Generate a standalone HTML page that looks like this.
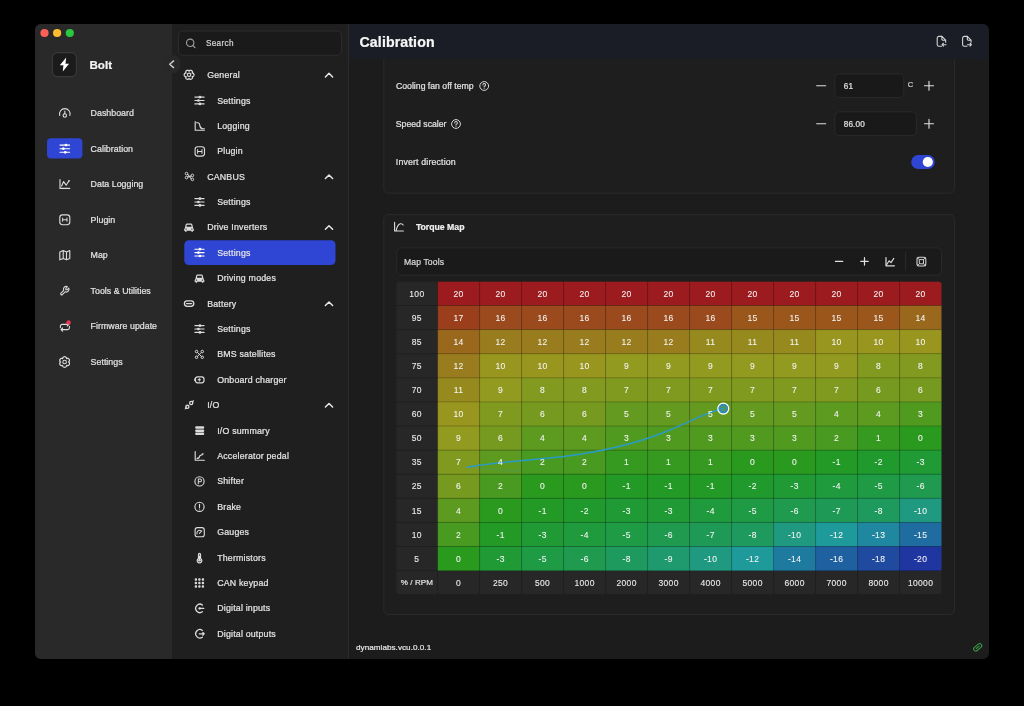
<!DOCTYPE html>
<html><head><meta charset="utf-8">
<style>
*{box-sizing:border-box;margin:0;padding:0}
html,body{width:1024px;height:706px;background:#000;overflow:hidden;font-family:"Liberation Sans",sans-serif}
#txt{position:absolute;left:0;top:0;width:1024px;height:706px;will-change:transform}
#win{position:absolute;left:35px;top:24px;width:953.5px;height:635px;border-radius:6px;overflow:hidden;background:#1c1c1c}
#sb1{position:absolute;left:0;top:0;width:137px;height:635px;background:#292929}
#sb2{position:absolute;left:137px;top:0;width:177px;height:635px;background:#1f1f1f;border-right:1px solid #2b2b2b}
.t{position:absolute;white-space:nowrap;line-height:1;color:#e2e2e2;-webkit-text-stroke:0.22px currentColor}
svg{position:absolute;left:0;top:0}
.hd{position:absolute;left:349px;top:24px;width:639.5px;height:35.3px;overflow:hidden}
</style></head><body>

<div id="win">
  <div id="sb1"></div>
  <div id="sb2"></div>
</div>

<svg width="1024" height="706" viewBox="0 0 1024 706">
<defs><clipPath id="mainclip"><rect x="349" y="59.3" width="639.5" height="599.7"/></clipPath></defs>
<circle cx="44.5" cy="33" r="4.1" fill="#fe5f57"/><circle cx="57.1" cy="33" r="4.1" fill="#febc2e"/><circle cx="69.8" cy="33" r="4.1" fill="#28c840"/>
<rect x="52.4" y="52.6" width="24" height="24" rx="5" fill="#1b1b1b" stroke="#3a3a3a" stroke-width="1.1"/><path d="M66.2,57.6L59.8,65.3H63.4L62.8,71.6L69.1,63.7H65.5Z" fill="#ffffff"/><circle cx="171.8" cy="64" r="9.2" fill="#282828"/><path d="M173.6,60.9L169.7,64.3L173.6,67.6" fill="none" stroke="#cfcfcf" stroke-width="1.4" stroke-linecap="round" stroke-linejoin="round" /><rect x="47" y="138.3" width="35.4" height="20.2" rx="4" fill="#2f45d3"/><path d="M59.7,115.4A5.3,5.3 0 1 1 69.9,115.4" fill="none" stroke="#dcdcdc" stroke-width="1.12" stroke-linecap="round" stroke-linejoin="round" /><circle cx="64.8" cy="115.5" r="1.7" fill="none" stroke="#dcdcdc" stroke-width="1.12"/><path d="M64.8,111.0V113.8" fill="none" stroke="#dcdcdc" stroke-width="1.12" stroke-linecap="round" stroke-linejoin="round" /><path d="M60.00,145.10H69.60" fill="none" stroke="#ffffff" stroke-width="1.12" stroke-linecap="round" stroke-linejoin="round" /><circle cx="65.95" cy="145.10" r="1.35" fill="#ffffff"/><path d="M60.00,148.70H69.60" fill="none" stroke="#ffffff" stroke-width="1.12" stroke-linecap="round" stroke-linejoin="round" /><circle cx="63.36" cy="148.70" r="1.35" fill="#ffffff"/><path d="M60.00,152.30H69.60" fill="none" stroke="#ffffff" stroke-width="1.12" stroke-linecap="round" stroke-linejoin="round" /><circle cx="65.28" cy="152.30" r="1.35" fill="#ffffff"/><path d="M60,179.6V188.39999999999998H69.7" fill="none" stroke="#dcdcdc" stroke-width="1.12" stroke-linecap="round" stroke-linejoin="round" /><path d="M61.6,186.0L63.6,181.6L66.2,185.2L68.8,181.0" fill="none" stroke="#dcdcdc" stroke-width="1.12" stroke-linecap="round" stroke-linejoin="round" /><circle cx="69" cy="180.79999999999998" r="0.9" fill="#dcdcdc"/><rect x="59.8" y="214.89999999999998" width="10" height="9.8" rx="2.6" fill="none" stroke="#dcdcdc" stroke-width="1.12"/><path d="M62.6,219.7H67M62.6,218.1V221.29999999999998M67,218.1V221.29999999999998" fill="none" stroke="#dcdcdc" stroke-width="1.01" stroke-linecap="round" stroke-linejoin="round" /><path d="M59.8,252.0L63.2,250.6L66.5,252.0L69.8,250.6V258.4L66.5,259.8L63.2,258.4L59.8,259.8Z M63.2,250.6V258.4 M66.5,252.0V259.8" fill="none" stroke="#dcdcdc" stroke-width="1.12" stroke-linecap="round" stroke-linejoin="round" /><g transform="translate(70.4,285.09999999999997) scale(-0.46,0.46)"><path d="M7 10h3v-3l-3.5 -3.5a6 6 0 0 1 8 8l6 6a2 2 0 0 1 -3 3l-6 -6a6 6 0 0 1 -8 -8l3.5 3.5" fill="none" stroke="#dcdcdc" stroke-width="2.3" stroke-linecap="round" stroke-linejoin="round"/></g><path d="M60.4,327.6V326.2A1.8,1.8 0 0 1 62.2,324.4H68.8 M67.2,322.8L68.8,324.4L67.2,326.0" fill="none" stroke="#dcdcdc" stroke-width="1.12" stroke-linecap="round" stroke-linejoin="round" /><path d="M69.4,326.4V327.8A1.8,1.8 0 0 1 67.6,329.6H61 M62.6,328.0L61,329.6L62.6,331.2" fill="none" stroke="#dcdcdc" stroke-width="1.12" stroke-linecap="round" stroke-linejoin="round" /><circle cx="68.6" cy="322.4" r="2.2" fill="#f2344f"/><path d="M68.50,362.00 L69.02,362.29 L69.25,362.61 L69.39,362.95 L69.47,363.30 L69.48,363.66 L69.44,364.00 L69.34,364.34 L69.19,364.65 L68.99,364.94 L68.75,365.19 L68.47,365.40 L68.16,365.56 L67.82,365.67 L67.45,365.72 L67.06,365.68 L66.55,365.38 L66.56,365.97 L66.39,366.33 L66.17,366.62 L65.90,366.87 L65.61,367.05 L65.28,367.19 L64.95,367.27 L64.60,367.30 L64.25,367.27 L63.92,367.19 L63.59,367.05 L63.30,366.87 L63.03,366.62 L62.81,366.33 L62.64,365.97 L62.65,365.38 L62.14,365.68 L61.75,365.72 L61.38,365.67 L61.04,365.56 L60.73,365.40 L60.45,365.19 L60.21,364.94 L60.01,364.65 L59.86,364.34 L59.76,364.00 L59.72,363.66 L59.73,363.30 L59.81,362.95 L59.95,362.61 L60.18,362.29 L60.70,362.00 L60.18,361.71 L59.95,361.39 L59.81,361.05 L59.73,360.70 L59.72,360.34 L59.76,360.00 L59.86,359.66 L60.01,359.35 L60.21,359.06 L60.45,358.81 L60.73,358.60 L61.04,358.44 L61.38,358.33 L61.75,358.28 L62.14,358.32 L62.65,358.62 L62.64,358.03 L62.81,357.67 L63.03,357.38 L63.30,357.13 L63.59,356.95 L63.92,356.81 L64.25,356.73 L64.60,356.70 L64.95,356.73 L65.28,356.81 L65.61,356.95 L65.90,357.13 L66.17,357.38 L66.39,357.67 L66.56,358.03 L66.55,358.62 L67.06,358.32 L67.45,358.28 L67.82,358.33 L68.16,358.44 L68.47,358.60 L68.75,358.81 L68.99,359.06 L69.19,359.35 L69.34,359.66 L69.44,360.00 L69.48,360.34 L69.47,360.70 L69.39,361.05 L69.25,361.39 L69.02,361.71Z" fill="none" stroke="#dcdcdc" stroke-width="1.18" stroke-linecap="round" stroke-linejoin="round" /><circle cx="64.6" cy="362.0" r="1.8" fill="none" stroke="#dcdcdc" stroke-width="1.05"/><rect x="178.5" y="31" width="163" height="24.2" rx="4.5" fill="#1a1a1a" stroke="#2c2c2c" stroke-width="1.12"/><circle cx="190.2" cy="42.8" r="3.7" fill="none" stroke="#a0a0a0" stroke-width="1.12"/><path d="M192.9,45.5L195,47.6" fill="none" stroke="#a0a0a0" stroke-width="1.12" stroke-linecap="round" stroke-linejoin="round" /><rect x="184.3" y="240.2" width="151.2" height="24.9" rx="4.5" fill="#2f45d3"/><path d="M325.40,76.90L329.00,73.30L332.60,76.90" fill="none" stroke="#e8e8e8" stroke-width="1.46" stroke-linecap="round" stroke-linejoin="round" /><path d="M325.40,178.50L329.00,174.90L332.60,178.50" fill="none" stroke="#e8e8e8" stroke-width="1.46" stroke-linecap="round" stroke-linejoin="round" /><path d="M325.40,229.30L329.00,225.70L332.60,229.30" fill="none" stroke="#e8e8e8" stroke-width="1.46" stroke-linecap="round" stroke-linejoin="round" /><path d="M325.40,305.50L329.00,301.90L332.60,305.50" fill="none" stroke="#e8e8e8" stroke-width="1.46" stroke-linecap="round" stroke-linejoin="round" /><path d="M325.40,407.10L329.00,403.50L332.60,407.10" fill="none" stroke="#e8e8e8" stroke-width="1.46" stroke-linecap="round" stroke-linejoin="round" /><path d="M194.00,74.80 L193.97,75.12 L193.89,75.43 L193.76,75.73 L193.58,76.00 L193.35,76.24 L193.06,76.44 L192.71,76.58 L192.13,76.55 L192.45,77.04 L192.50,77.41 L192.47,77.76 L192.38,78.08 L192.23,78.37 L192.04,78.64 L191.81,78.86 L191.55,79.04 L191.26,79.18 L190.95,79.27 L190.63,79.30 L190.30,79.28 L189.97,79.20 L189.66,79.05 L189.36,78.82 L189.10,78.30 L188.84,78.82 L188.54,79.05 L188.23,79.20 L187.90,79.28 L187.57,79.30 L187.25,79.27 L186.94,79.18 L186.65,79.04 L186.39,78.86 L186.16,78.64 L185.97,78.37 L185.82,78.08 L185.73,77.76 L185.70,77.41 L185.75,77.04 L186.07,76.55 L185.49,76.58 L185.14,76.44 L184.85,76.24 L184.62,76.00 L184.44,75.73 L184.31,75.43 L184.23,75.12 L184.20,74.80 L184.23,74.48 L184.31,74.17 L184.44,73.87 L184.62,73.60 L184.85,73.36 L185.14,73.16 L185.49,73.02 L186.07,73.05 L185.75,72.56 L185.70,72.19 L185.73,71.84 L185.82,71.52 L185.97,71.23 L186.16,70.96 L186.39,70.74 L186.65,70.56 L186.94,70.42 L187.25,70.33 L187.57,70.30 L187.90,70.32 L188.23,70.40 L188.54,70.55 L188.84,70.78 L189.10,71.30 L189.36,70.78 L189.66,70.55 L189.97,70.40 L190.30,70.32 L190.63,70.30 L190.95,70.33 L191.26,70.42 L191.55,70.56 L191.81,70.74 L192.04,70.96 L192.23,71.23 L192.38,71.52 L192.47,71.84 L192.50,72.19 L192.45,72.56 L192.13,73.05 L192.71,73.02 L193.06,73.16 L193.35,73.36 L193.58,73.60 L193.76,73.87 L193.89,74.17 L193.97,74.48Z" fill="none" stroke="#dcdcdc" stroke-width="1.23" stroke-linecap="round" stroke-linejoin="round" /><circle cx="189.1" cy="74.8" r="1.7" fill="none" stroke="#dcdcdc" stroke-width="1.1"/><circle cx="186.5" cy="173.6" r="1.3" fill="none" stroke="#dcdcdc" stroke-width="0.9"/><circle cx="186.5" cy="177.6" r="1.3" fill="none" stroke="#dcdcdc" stroke-width="0.9"/><circle cx="192.4" cy="175.4" r="1.3" fill="none" stroke="#dcdcdc" stroke-width="0.9"/><circle cx="192.4" cy="179.4" r="1.3" fill="none" stroke="#dcdcdc" stroke-width="0.9"/><path d="M187.7,174.2L191.2,178.79999999999998 M187.7,177.0L191.2,176.0" fill="none" stroke="#dcdcdc" stroke-width="1.01" stroke-linecap="round" stroke-linejoin="round" /><path d="M184.8,228.2L185.7,224.6Q186.0,223.6 187.0,223.6H191.0Q192.0,223.6 192.3,224.6L193.2,228.2Q193.9,228.79999999999998 193.9,229.79999999999998V230.79999999999998H192.9V231.79999999999998H191.4V230.79999999999998H186.6V231.79999999999998H185.1V230.79999999999998H184.1V229.79999999999998Q184.1,228.79999999999998 184.8,228.2Z" fill="#dcdcdc"/><path d="M186.4,226.79999999999998L186.9,224.79999999999998H191.1L191.6,226.79999999999998Z" fill="#1f1f1f"/><circle cx="186.1" cy="229.1" r="0.7" fill="#1f1f1f"/><circle cx="191.9" cy="229.1" r="0.7" fill="#1f1f1f"/><rect x="184.4" y="300.8" width="9.4" height="5.6" rx="2.8" fill="none" stroke="#dcdcdc" stroke-width="1.3"/><path d="M186.6,303.6H191.6" fill="none" stroke="#dcdcdc" stroke-width="1.34" stroke-linecap="round" stroke-linejoin="round" /><circle cx="187.4" cy="406.80" r="1.55" fill="none" stroke="#dcdcdc" stroke-width="1.3"/><circle cx="191.2" cy="403.00" r="1.55" fill="none" stroke="#dcdcdc" stroke-width="1.3"/><path d="M184.6,409.60L185.6,406.80L187.4,408.60Z" fill="#dcdcdc"/><path d="M194.2,400.00L191.2,401.20L193,403.00Z" fill="#dcdcdc"/><path d="M194.90,97.10H204.10" fill="none" stroke="#dcdcdc" stroke-width="1.12" stroke-linecap="round" stroke-linejoin="round" /><circle cx="199.96" cy="97.10" r="1.35" fill="#dcdcdc"/><path d="M194.90,100.50H204.10" fill="none" stroke="#dcdcdc" stroke-width="1.12" stroke-linecap="round" stroke-linejoin="round" /><circle cx="198.40" cy="100.50" r="1.35" fill="#dcdcdc"/><path d="M194.90,103.90H204.10" fill="none" stroke="#dcdcdc" stroke-width="1.12" stroke-linecap="round" stroke-linejoin="round" /><circle cx="199.96" cy="103.90" r="1.35" fill="#dcdcdc"/><path d="M194.90,198.60H204.10" fill="none" stroke="#dcdcdc" stroke-width="1.12" stroke-linecap="round" stroke-linejoin="round" /><circle cx="199.96" cy="198.60" r="1.35" fill="#dcdcdc"/><path d="M194.90,202.00H204.10" fill="none" stroke="#dcdcdc" stroke-width="1.12" stroke-linecap="round" stroke-linejoin="round" /><circle cx="198.40" cy="202.00" r="1.35" fill="#dcdcdc"/><path d="M194.90,205.40H204.10" fill="none" stroke="#dcdcdc" stroke-width="1.12" stroke-linecap="round" stroke-linejoin="round" /><circle cx="199.96" cy="205.40" r="1.35" fill="#dcdcdc"/><path d="M194.90,249.20H204.10" fill="none" stroke="#ffffff" stroke-width="1.12" stroke-linecap="round" stroke-linejoin="round" /><circle cx="199.96" cy="249.20" r="1.35" fill="#ffffff"/><path d="M194.90,252.60H204.10" fill="none" stroke="#ffffff" stroke-width="1.12" stroke-linecap="round" stroke-linejoin="round" /><circle cx="198.40" cy="252.60" r="1.35" fill="#ffffff"/><path d="M194.90,256.00H204.10" fill="none" stroke="#ffffff" stroke-width="1.12" stroke-linecap="round" stroke-linejoin="round" /><circle cx="199.96" cy="256.00" r="1.35" fill="#ffffff"/><path d="M194.90,325.60H204.10" fill="none" stroke="#dcdcdc" stroke-width="1.12" stroke-linecap="round" stroke-linejoin="round" /><circle cx="199.96" cy="325.60" r="1.35" fill="#dcdcdc"/><path d="M194.90,329.00H204.10" fill="none" stroke="#dcdcdc" stroke-width="1.12" stroke-linecap="round" stroke-linejoin="round" /><circle cx="198.40" cy="329.00" r="1.35" fill="#dcdcdc"/><path d="M194.90,332.40H204.10" fill="none" stroke="#dcdcdc" stroke-width="1.12" stroke-linecap="round" stroke-linejoin="round" /><circle cx="199.96" cy="332.40" r="1.35" fill="#dcdcdc"/><path d="M195.2,121.6V130.2H204.4" fill="none" stroke="#dcdcdc" stroke-width="1.12" stroke-linecap="round" stroke-linejoin="round" /><path d="M196.6,122.8H198Q199.4,122.8 199.8,125.4Q200.3,128.8 202.8,128.8H204.4" fill="none" stroke="#dcdcdc" stroke-width="1.12" stroke-linecap="round" stroke-linejoin="round" /><rect x="195.1" y="146.70000000000002" width="9.4" height="9.4" rx="2.6" fill="none" stroke="#dcdcdc" stroke-width="1.12"/><path d="M197.6,151.4H202M197.6,149.6V153.20000000000002M202,149.6V153.20000000000002" fill="none" stroke="#dcdcdc" stroke-width="1.01" stroke-linecap="round" stroke-linejoin="round" /><path d="M195.3,279.2L196.2,275.59999999999997Q196.5,274.59999999999997 197.5,274.59999999999997H201.5Q202.5,274.59999999999997 202.8,275.59999999999997L203.7,279.2Q204.4,279.8 204.4,280.8V281.8H203.4V282.8H201.9V281.8H197.1V282.8H195.6V281.8H194.6V280.8Q194.6,279.8 195.3,279.2Z" fill="#dcdcdc"/><path d="M196.9,277.8L197.4,275.8H201.6L202.1,277.8Z" fill="#1f1f1f"/><circle cx="196.6" cy="280.09999999999997" r="0.7" fill="#1f1f1f"/><circle cx="202.4" cy="280.09999999999997" r="0.7" fill="#1f1f1f"/><g fill="none" stroke="#dcdcdc" stroke-width="1.0"><circle cx="196.53" cy="351.52" r="1.25"/><circle cx="202.28" cy="351.52" r="1.25"/><circle cx="196.53" cy="357.27" r="1.25"/><circle cx="202.28" cy="357.27" r="1.25"/><path d="M197.4,352.4L201.4,356.4M201.4,352.4L197.4,356.4"/></g><rect x="195.4" y="376.8" width="8.6" height="6" rx="2.2" fill="none" stroke="#dcdcdc" stroke-width="1.2"/><path d="M198,379.8H200.6M199.3,378.5V381.1" fill="none" stroke="#dcdcdc" stroke-width="1.01" stroke-linecap="round" stroke-linejoin="round" /><path d="M194.2,378.6h0.8v2.4h-0.8z" fill="#dcdcdc"/><rect x="195.2" y="426.30" width="9" height="2.5" rx="1" fill="#dcdcdc"/><rect x="195.2" y="429.40" width="9" height="2.5" rx="1" fill="#dcdcdc"/><rect x="195.2" y="432.50" width="9" height="2.5" rx="1" fill="#dcdcdc"/><path d="M195.2,451.6V460.2H204.4" fill="none" stroke="#dcdcdc" stroke-width="1.12" stroke-linecap="round" stroke-linejoin="round" /><path d="M197,458.4Q199.4,458.4 199.8,455.8L202.4,454.4" fill="none" stroke="#dcdcdc" stroke-width="1.12" stroke-linecap="round" stroke-linejoin="round" /><path d="M203.8,453.4L201.6,453.2L202.8,455.4Z" fill="#dcdcdc"/><circle cx="199.5" cy="481.4" r="4.6" fill="none" stroke="#dcdcdc" stroke-width="1.12"/><path d="M198.3,483.79999999999995V479.09999999999997H200.1A1.35,1.35 0 0 1 200.1,481.79999999999995H198.3" fill="none" stroke="#dcdcdc" stroke-width="1.01" stroke-linecap="round" stroke-linejoin="round" /><circle cx="199.5" cy="506.8" r="4.6" fill="none" stroke="#dcdcdc" stroke-width="1.12"/><path d="M199.5,504.40000000000003V507.40000000000003" fill="none" stroke="#dcdcdc" stroke-width="1.12" stroke-linecap="round" stroke-linejoin="round" /><circle cx="199.5" cy="509.0" r="0.6" fill="#dcdcdc"/><rect x="195.1" y="527.6" width="9.2" height="9.2" rx="2.4" fill="none" stroke="#dcdcdc" stroke-width="1.12"/><path d="M197,534.0A2.8,2.8 0 0 1 200.8,530.6 M199.4,533.4000000000001L201.8,530.8000000000001" fill="none" stroke="#dcdcdc" stroke-width="1.01" stroke-linecap="round" stroke-linejoin="round" /><path d="M198.5,558.5V554.4A1,1 0 0 1 200.5,554.4V558.5A2.3,2.3 0 1 1 198.5,558.5Z" fill="none" stroke="#dcdcdc" stroke-width="1.23" stroke-linecap="round" stroke-linejoin="round" /><circle cx="199.5" cy="560.2" r="1.3" fill="#dcdcdc"/><path d="M199.5,556.1V559.6" fill="none" stroke="#dcdcdc" stroke-width="1.01" stroke-linecap="round" stroke-linejoin="round" /><rect x="194.70" y="578.30" width="2.4" height="2.4" rx="0.9" fill="#dcdcdc"/><rect x="194.70" y="581.80" width="2.4" height="2.4" rx="0.9" fill="#dcdcdc"/><rect x="194.70" y="585.30" width="2.4" height="2.4" rx="0.9" fill="#dcdcdc"/><rect x="198.20" y="578.30" width="2.4" height="2.4" rx="0.9" fill="#dcdcdc"/><rect x="198.20" y="581.80" width="2.4" height="2.4" rx="0.9" fill="#dcdcdc"/><rect x="198.20" y="585.30" width="2.4" height="2.4" rx="0.9" fill="#dcdcdc"/><rect x="201.70" y="578.30" width="2.4" height="2.4" rx="0.9" fill="#dcdcdc"/><rect x="201.70" y="581.80" width="2.4" height="2.4" rx="0.9" fill="#dcdcdc"/><rect x="201.70" y="585.30" width="2.4" height="2.4" rx="0.9" fill="#dcdcdc"/><path d="M202.4,605.0A4.2,4.2 0 1 0 202.4,611.8" fill="none" stroke="#dcdcdc" stroke-width="1.29" stroke-linecap="round" stroke-linejoin="round" /><path d="M203.8,608.4H199.6" fill="none" stroke="#dcdcdc" stroke-width="1.23" stroke-linecap="round" stroke-linejoin="round" /><circle cx="199.6" cy="608.4" r="1.2" fill="#dcdcdc"/><path d="M202.4,630.4A4.2,4.2 0 1 0 202.4,637.1999999999999" fill="none" stroke="#dcdcdc" stroke-width="1.29" stroke-linecap="round" stroke-linejoin="round" /><path d="M199.2,633.8H204.2M202.8,632.4L204.2,633.8L202.8,635.1999999999999" fill="none" stroke="#dcdcdc" stroke-width="1.23" stroke-linecap="round" stroke-linejoin="round" /><rect x="383.8" y="40" width="570.6" height="153.2" rx="4.5" fill="#1e1e1e" stroke="#2b2b2b" stroke-width="1"/><circle cx="484.2" cy="86.0" r="4.4" fill="none" stroke="#d8d8d8" stroke-width="1"/><path d="M482.9,84.9A1.35,1.35 0 1 1 484.2,86.3V86.9" fill="none" stroke="#d8d8d8" stroke-width="1.01" stroke-linecap="round" stroke-linejoin="round" /><circle cx="484.2" cy="88.3" r="0.55" fill="#d8d8d8"/><circle cx="456.0" cy="124.0" r="4.4" fill="none" stroke="#d8d8d8" stroke-width="1"/><path d="M454.7,122.9A1.35,1.35 0 1 1 456.0,124.3V124.9" fill="none" stroke="#d8d8d8" stroke-width="1.01" stroke-linecap="round" stroke-linejoin="round" /><circle cx="456.0" cy="126.3" r="0.55" fill="#d8d8d8"/><path d="M816.7,85.8H825.7" fill="none" stroke="#e0e0e0" stroke-width="1.12" stroke-linecap="round" stroke-linejoin="round" /><path d="M924.5,85.8H933.5M929.0,81.3V90.3" fill="none" stroke="#e0e0e0" stroke-width="1.12" stroke-linecap="round" stroke-linejoin="round" /><path d="M816.7,123.8H825.7" fill="none" stroke="#e0e0e0" stroke-width="1.12" stroke-linecap="round" stroke-linejoin="round" /><path d="M924.5,123.8H933.5M929.0,119.3V128.3" fill="none" stroke="#e0e0e0" stroke-width="1.12" stroke-linecap="round" stroke-linejoin="round" /><rect x="834.8" y="73.8" width="69" height="23.8" rx="4.5" fill="#191919" stroke="#2a2a2a" stroke-width="1"/><rect x="834.8" y="111.8" width="81.6" height="23.8" rx="4.5" fill="#191919" stroke="#2a2a2a" stroke-width="1"/><rect x="911.2" y="155" width="23.6" height="14" rx="7" fill="#2f45d3"/><circle cx="927.8" cy="162" r="5.1" fill="#ffffff"/><rect x="383.8" y="214.6" width="570.6" height="399.8" rx="4.5" fill="#1e1e1e" stroke="#2b2b2b" stroke-width="1"/><path d="M394.6,222.4V231H403.4" fill="none" stroke="#dcdcdc" stroke-width="1.12" stroke-linecap="round" stroke-linejoin="round" /><path d="M396.2,230.6Q397.4,224.6 400.2,223.8Q402.4,223.4 403.2,225" fill="none" stroke="#dcdcdc" stroke-width="1.12" stroke-linecap="round" stroke-linejoin="round" /><rect x="396.8" y="247.9" width="544.8" height="27.2" rx="4.5" fill="#1a1a1a" stroke="#2a2a2a" stroke-width="1"/><path d="M835.5,261.4H842.7" fill="none" stroke="#e0e0e0" stroke-width="1.23" stroke-linecap="round" stroke-linejoin="round" /><path d="M860.8,261.4H868.2M864.5,257.7V265.09999999999997" fill="none" stroke="#e0e0e0" stroke-width="1.23" stroke-linecap="round" stroke-linejoin="round" /><path d="M886,257.6V265.8H894.4" fill="none" stroke="#dcdcdc" stroke-width="1.23" stroke-linecap="round" stroke-linejoin="round" /><path d="M886.4,265L889.2,260.8L891,262.6L893.8,258.4" fill="none" stroke="#dcdcdc" stroke-width="1.12" stroke-linecap="round" stroke-linejoin="round" /><path d="M905.6,252.2V270.6" fill="none" stroke="#2a2a2a" stroke-width="1.12" stroke-linecap="round" stroke-linejoin="round" /><rect x="917" y="257.3" width="8.8" height="8.8" rx="2" fill="none" stroke="#d8d8d8" stroke-width="1.05"/><rect x="919.3" y="259.6" width="4.2" height="4.2" rx="0.5" fill="none" stroke="#d8d8d8" stroke-width="0.95"/><path d="M917.6,257.9L919.4,259.7M925.2,257.9L923.4,259.7M917.6,265.5L919.4,263.7M925.2,265.5L923.4,263.7" fill="none" stroke="#d8d8d8" stroke-width="0.9" stroke-linecap="round" stroke-linejoin="round" /><clipPath id="tc"><rect x="396.2" y="281.4" width="545.40" height="312.80" rx="3.5"/></clipPath><g clip-path="url(#tc)"><rect x="396.2" y="281.4" width="545.40" height="312.80" fill="#272727"/><rect x="437.60" y="281.40" width="42.20" height="24.30" fill="rgb(156, 27, 30)"/><rect x="479.60" y="281.40" width="42.20" height="24.30" fill="rgb(156, 27, 30)"/><rect x="521.60" y="281.40" width="42.20" height="24.30" fill="rgb(156, 27, 30)"/><rect x="563.60" y="281.40" width="42.20" height="24.30" fill="rgb(156, 27, 30)"/><rect x="605.60" y="281.40" width="42.20" height="24.30" fill="rgb(156, 27, 30)"/><rect x="647.60" y="281.40" width="42.20" height="24.30" fill="rgb(156, 27, 30)"/><rect x="689.60" y="281.40" width="42.20" height="24.30" fill="rgb(156, 27, 30)"/><rect x="731.60" y="281.40" width="42.20" height="24.30" fill="rgb(156, 27, 30)"/><rect x="773.60" y="281.40" width="42.20" height="24.30" fill="rgb(156, 27, 30)"/><rect x="815.60" y="281.40" width="42.20" height="24.30" fill="rgb(156, 27, 30)"/><rect x="857.60" y="281.40" width="42.20" height="24.30" fill="rgb(156, 27, 30)"/><rect x="899.60" y="281.40" width="42.20" height="24.30" fill="rgb(156, 27, 30)"/><rect x="437.60" y="305.50" width="42.20" height="24.30" fill="rgb(154, 62, 28)"/><rect x="479.60" y="305.50" width="42.20" height="24.30" fill="rgb(154, 74, 28)"/><rect x="521.60" y="305.50" width="42.20" height="24.30" fill="rgb(154, 74, 28)"/><rect x="563.60" y="305.50" width="42.20" height="24.30" fill="rgb(154, 74, 28)"/><rect x="605.60" y="305.50" width="42.20" height="24.30" fill="rgb(154, 74, 28)"/><rect x="647.60" y="305.50" width="42.20" height="24.30" fill="rgb(154, 74, 28)"/><rect x="689.60" y="305.50" width="42.20" height="24.30" fill="rgb(154, 74, 28)"/><rect x="731.60" y="305.50" width="42.20" height="24.30" fill="rgb(155, 86, 28)"/><rect x="773.60" y="305.50" width="42.20" height="24.30" fill="rgb(155, 86, 28)"/><rect x="815.60" y="305.50" width="42.20" height="24.30" fill="rgb(155, 86, 28)"/><rect x="857.60" y="305.50" width="42.20" height="24.30" fill="rgb(155, 86, 28)"/><rect x="899.60" y="305.50" width="42.20" height="24.30" fill="rgb(154, 104, 28)"/><rect x="437.60" y="329.60" width="42.20" height="24.30" fill="rgb(154, 104, 28)"/><rect x="479.60" y="329.60" width="42.20" height="24.30" fill="rgb(152, 124, 30)"/><rect x="521.60" y="329.60" width="42.20" height="24.30" fill="rgb(152, 124, 30)"/><rect x="563.60" y="329.60" width="42.20" height="24.30" fill="rgb(152, 124, 30)"/><rect x="605.60" y="329.60" width="42.20" height="24.30" fill="rgb(152, 124, 30)"/><rect x="647.60" y="329.60" width="42.20" height="24.30" fill="rgb(152, 124, 30)"/><rect x="689.60" y="329.60" width="42.20" height="24.30" fill="rgb(150, 138, 30)"/><rect x="731.60" y="329.60" width="42.20" height="24.30" fill="rgb(150, 138, 30)"/><rect x="773.60" y="329.60" width="42.20" height="24.30" fill="rgb(150, 138, 30)"/><rect x="815.60" y="329.60" width="42.20" height="24.30" fill="rgb(152, 150, 30)"/><rect x="857.60" y="329.60" width="42.20" height="24.30" fill="rgb(152, 150, 30)"/><rect x="899.60" y="329.60" width="42.20" height="24.30" fill="rgb(152, 150, 30)"/><rect x="437.60" y="353.70" width="42.20" height="24.30" fill="rgb(152, 124, 30)"/><rect x="479.60" y="353.70" width="42.20" height="24.30" fill="rgb(152, 150, 30)"/><rect x="521.60" y="353.70" width="42.20" height="24.30" fill="rgb(152, 150, 30)"/><rect x="563.60" y="353.70" width="42.20" height="24.30" fill="rgb(152, 150, 30)"/><rect x="605.60" y="353.70" width="42.20" height="24.30" fill="rgb(146, 154, 31)"/><rect x="647.60" y="353.70" width="42.20" height="24.30" fill="rgb(146, 154, 31)"/><rect x="689.60" y="353.70" width="42.20" height="24.30" fill="rgb(146, 154, 31)"/><rect x="731.60" y="353.70" width="42.20" height="24.30" fill="rgb(146, 154, 31)"/><rect x="773.60" y="353.70" width="42.20" height="24.30" fill="rgb(146, 154, 31)"/><rect x="815.60" y="353.70" width="42.20" height="24.30" fill="rgb(146, 154, 31)"/><rect x="857.60" y="353.70" width="42.20" height="24.30" fill="rgb(130, 154, 31)"/><rect x="899.60" y="353.70" width="42.20" height="24.30" fill="rgb(130, 154, 31)"/><rect x="437.60" y="377.80" width="42.20" height="24.30" fill="rgb(150, 138, 30)"/><rect x="479.60" y="377.80" width="42.20" height="24.30" fill="rgb(146, 154, 31)"/><rect x="521.60" y="377.80" width="42.20" height="24.30" fill="rgb(130, 154, 31)"/><rect x="563.60" y="377.80" width="42.20" height="24.30" fill="rgb(130, 154, 31)"/><rect x="605.60" y="377.80" width="42.20" height="24.30" fill="rgb(128, 154, 31)"/><rect x="647.60" y="377.80" width="42.20" height="24.30" fill="rgb(128, 154, 31)"/><rect x="689.60" y="377.80" width="42.20" height="24.30" fill="rgb(128, 154, 31)"/><rect x="731.60" y="377.80" width="42.20" height="24.30" fill="rgb(128, 154, 31)"/><rect x="773.60" y="377.80" width="42.20" height="24.30" fill="rgb(128, 154, 31)"/><rect x="815.60" y="377.80" width="42.20" height="24.30" fill="rgb(128, 154, 31)"/><rect x="857.60" y="377.80" width="42.20" height="24.30" fill="rgb(118, 154, 31)"/><rect x="899.60" y="377.80" width="42.20" height="24.30" fill="rgb(118, 154, 31)"/><rect x="437.60" y="401.90" width="42.20" height="24.30" fill="rgb(152, 150, 30)"/><rect x="479.60" y="401.90" width="42.20" height="24.30" fill="rgb(128, 154, 31)"/><rect x="521.60" y="401.90" width="42.20" height="24.30" fill="rgb(118, 154, 31)"/><rect x="563.60" y="401.90" width="42.20" height="24.30" fill="rgb(118, 154, 31)"/><rect x="605.60" y="401.90" width="42.20" height="24.30" fill="rgb(100, 154, 31)"/><rect x="647.60" y="401.90" width="42.20" height="24.30" fill="rgb(100, 154, 31)"/><rect x="689.60" y="401.90" width="42.20" height="24.30" fill="rgb(100, 154, 31)"/><rect x="731.60" y="401.90" width="42.20" height="24.30" fill="rgb(100, 154, 31)"/><rect x="773.60" y="401.90" width="42.20" height="24.30" fill="rgb(100, 154, 31)"/><rect x="815.60" y="401.90" width="42.20" height="24.30" fill="rgb(92, 154, 32)"/><rect x="857.60" y="401.90" width="42.20" height="24.30" fill="rgb(92, 154, 32)"/><rect x="899.60" y="401.90" width="42.20" height="24.30" fill="rgb(80, 154, 32)"/><rect x="437.60" y="426.00" width="42.20" height="24.30" fill="rgb(146, 154, 31)"/><rect x="479.60" y="426.00" width="42.20" height="24.30" fill="rgb(118, 154, 31)"/><rect x="521.60" y="426.00" width="42.20" height="24.30" fill="rgb(92, 154, 32)"/><rect x="563.60" y="426.00" width="42.20" height="24.30" fill="rgb(92, 154, 32)"/><rect x="605.60" y="426.00" width="42.20" height="24.30" fill="rgb(80, 154, 32)"/><rect x="647.60" y="426.00" width="42.20" height="24.30" fill="rgb(80, 154, 32)"/><rect x="689.60" y="426.00" width="42.20" height="24.30" fill="rgb(80, 154, 32)"/><rect x="731.60" y="426.00" width="42.20" height="24.30" fill="rgb(80, 154, 32)"/><rect x="773.60" y="426.00" width="42.20" height="24.30" fill="rgb(80, 154, 32)"/><rect x="815.60" y="426.00" width="42.20" height="24.30" fill="rgb(72, 154, 33)"/><rect x="857.60" y="426.00" width="42.20" height="24.30" fill="rgb(54, 154, 32)"/><rect x="899.60" y="426.00" width="42.20" height="24.30" fill="rgb(42, 154, 31)"/><rect x="437.60" y="450.10" width="42.20" height="24.30" fill="rgb(128, 154, 31)"/><rect x="479.60" y="450.10" width="42.20" height="24.30" fill="rgb(92, 154, 32)"/><rect x="521.60" y="450.10" width="42.20" height="24.30" fill="rgb(72, 154, 33)"/><rect x="563.60" y="450.10" width="42.20" height="24.30" fill="rgb(72, 154, 33)"/><rect x="605.60" y="450.10" width="42.20" height="24.30" fill="rgb(54, 154, 32)"/><rect x="647.60" y="450.10" width="42.20" height="24.30" fill="rgb(54, 154, 32)"/><rect x="689.60" y="450.10" width="42.20" height="24.30" fill="rgb(54, 154, 32)"/><rect x="731.60" y="450.10" width="42.20" height="24.30" fill="rgb(42, 154, 31)"/><rect x="773.60" y="450.10" width="42.20" height="24.30" fill="rgb(42, 154, 31)"/><rect x="815.60" y="450.10" width="42.20" height="24.30" fill="rgb(34, 154, 37)"/><rect x="857.60" y="450.10" width="42.20" height="24.30" fill="rgb(32, 154, 45)"/><rect x="899.60" y="450.10" width="42.20" height="24.30" fill="rgb(31, 154, 53)"/><rect x="437.60" y="474.20" width="42.20" height="24.30" fill="rgb(118, 154, 31)"/><rect x="479.60" y="474.20" width="42.20" height="24.30" fill="rgb(72, 154, 33)"/><rect x="521.60" y="474.20" width="42.20" height="24.30" fill="rgb(42, 154, 31)"/><rect x="563.60" y="474.20" width="42.20" height="24.30" fill="rgb(42, 154, 31)"/><rect x="605.60" y="474.20" width="42.20" height="24.30" fill="rgb(34, 154, 37)"/><rect x="647.60" y="474.20" width="42.20" height="24.30" fill="rgb(34, 154, 37)"/><rect x="689.60" y="474.20" width="42.20" height="24.30" fill="rgb(34, 154, 37)"/><rect x="731.60" y="474.20" width="42.20" height="24.30" fill="rgb(32, 154, 45)"/><rect x="773.60" y="474.20" width="42.20" height="24.30" fill="rgb(31, 154, 53)"/><rect x="815.60" y="474.20" width="42.20" height="24.30" fill="rgb(31, 154, 61)"/><rect x="857.60" y="474.20" width="42.20" height="24.30" fill="rgb(31, 154, 69)"/><rect x="899.60" y="474.20" width="42.20" height="24.30" fill="rgb(31, 154, 78)"/><rect x="437.60" y="498.30" width="42.20" height="24.30" fill="rgb(92, 154, 32)"/><rect x="479.60" y="498.30" width="42.20" height="24.30" fill="rgb(42, 154, 31)"/><rect x="521.60" y="498.30" width="42.20" height="24.30" fill="rgb(34, 154, 37)"/><rect x="563.60" y="498.30" width="42.20" height="24.30" fill="rgb(32, 154, 45)"/><rect x="605.60" y="498.30" width="42.20" height="24.30" fill="rgb(31, 154, 53)"/><rect x="647.60" y="498.30" width="42.20" height="24.30" fill="rgb(31, 154, 53)"/><rect x="689.60" y="498.30" width="42.20" height="24.30" fill="rgb(31, 154, 61)"/><rect x="731.60" y="498.30" width="42.20" height="24.30" fill="rgb(31, 154, 69)"/><rect x="773.60" y="498.30" width="42.20" height="24.30" fill="rgb(31, 154, 78)"/><rect x="815.60" y="498.30" width="42.20" height="24.30" fill="rgb(31, 154, 86)"/><rect x="857.60" y="498.30" width="42.20" height="24.30" fill="rgb(31, 154, 94)"/><rect x="899.60" y="498.30" width="42.20" height="24.30" fill="rgb(31, 154, 128)"/><rect x="437.60" y="522.40" width="42.20" height="24.30" fill="rgb(72, 154, 33)"/><rect x="479.60" y="522.40" width="42.20" height="24.30" fill="rgb(34, 154, 37)"/><rect x="521.60" y="522.40" width="42.20" height="24.30" fill="rgb(31, 154, 53)"/><rect x="563.60" y="522.40" width="42.20" height="24.30" fill="rgb(31, 154, 61)"/><rect x="605.60" y="522.40" width="42.20" height="24.30" fill="rgb(31, 154, 69)"/><rect x="647.60" y="522.40" width="42.20" height="24.30" fill="rgb(31, 154, 78)"/><rect x="689.60" y="522.40" width="42.20" height="24.30" fill="rgb(31, 154, 86)"/><rect x="731.60" y="522.40" width="42.20" height="24.30" fill="rgb(31, 154, 94)"/><rect x="773.60" y="522.40" width="42.20" height="24.30" fill="rgb(31, 154, 128)"/><rect x="815.60" y="522.40" width="42.20" height="24.30" fill="rgb(31, 154, 154)"/><rect x="857.60" y="522.40" width="42.20" height="24.30" fill="rgb(31, 136, 160)"/><rect x="899.60" y="522.40" width="42.20" height="24.30" fill="rgb(31, 108, 160)"/><rect x="437.60" y="546.50" width="42.20" height="24.30" fill="rgb(42, 154, 31)"/><rect x="479.60" y="546.50" width="42.20" height="24.30" fill="rgb(31, 154, 53)"/><rect x="521.60" y="546.50" width="42.20" height="24.30" fill="rgb(31, 154, 69)"/><rect x="563.60" y="546.50" width="42.20" height="24.30" fill="rgb(31, 154, 78)"/><rect x="605.60" y="546.50" width="42.20" height="24.30" fill="rgb(31, 154, 94)"/><rect x="647.60" y="546.50" width="42.20" height="24.30" fill="rgb(31, 154, 111)"/><rect x="689.60" y="546.50" width="42.20" height="24.30" fill="rgb(31, 154, 128)"/><rect x="731.60" y="546.50" width="42.20" height="24.30" fill="rgb(31, 154, 154)"/><rect x="773.60" y="546.50" width="42.20" height="24.30" fill="rgb(31, 122, 160)"/><rect x="815.60" y="546.50" width="42.20" height="24.30" fill="rgb(31, 96, 160)"/><rect x="857.60" y="546.50" width="42.20" height="24.30" fill="rgb(31, 74, 160)"/><rect x="899.60" y="546.50" width="42.20" height="24.30" fill="rgb(31, 53, 160)"/><rect x="437.10" y="281.4" width="1" height="312.80" fill="rgba(0,0,0,0.22)"/><rect x="479.10" y="281.4" width="1" height="312.80" fill="rgba(0,0,0,0.22)"/><rect x="521.10" y="281.4" width="1" height="312.80" fill="rgba(0,0,0,0.22)"/><rect x="563.10" y="281.4" width="1" height="312.80" fill="rgba(0,0,0,0.22)"/><rect x="605.10" y="281.4" width="1" height="312.80" fill="rgba(0,0,0,0.22)"/><rect x="647.10" y="281.4" width="1" height="312.80" fill="rgba(0,0,0,0.22)"/><rect x="689.10" y="281.4" width="1" height="312.80" fill="rgba(0,0,0,0.22)"/><rect x="731.10" y="281.4" width="1" height="312.80" fill="rgba(0,0,0,0.22)"/><rect x="773.10" y="281.4" width="1" height="312.80" fill="rgba(0,0,0,0.22)"/><rect x="815.10" y="281.4" width="1" height="312.80" fill="rgba(0,0,0,0.22)"/><rect x="857.10" y="281.4" width="1" height="312.80" fill="rgba(0,0,0,0.22)"/><rect x="899.10" y="281.4" width="1" height="312.80" fill="rgba(0,0,0,0.22)"/><rect x="396.2" y="305.00" width="545.40" height="1" fill="rgba(0,0,0,0.22)"/><rect x="396.2" y="329.10" width="545.40" height="1" fill="rgba(0,0,0,0.22)"/><rect x="396.2" y="353.20" width="545.40" height="1" fill="rgba(0,0,0,0.22)"/><rect x="396.2" y="377.30" width="545.40" height="1" fill="rgba(0,0,0,0.22)"/><rect x="396.2" y="401.40" width="545.40" height="1" fill="rgba(0,0,0,0.22)"/><rect x="396.2" y="425.50" width="545.40" height="1" fill="rgba(0,0,0,0.22)"/><rect x="396.2" y="449.60" width="545.40" height="1" fill="rgba(0,0,0,0.22)"/><rect x="396.2" y="473.70" width="545.40" height="1" fill="rgba(0,0,0,0.22)"/><rect x="396.2" y="497.80" width="545.40" height="1" fill="rgba(0,0,0,0.22)"/><rect x="396.2" y="521.90" width="545.40" height="1" fill="rgba(0,0,0,0.22)"/><rect x="396.2" y="546.00" width="545.40" height="1" fill="rgba(0,0,0,0.22)"/><rect x="396.2" y="570.10" width="545.40" height="1" fill="rgba(0,0,0,0.22)"/></g><g transform="rotate(-40 977.7 647.3)"><rect x="973.1" y="645.2" width="9.2" height="4.2" rx="2.1" fill="none" stroke="#3c9a46" stroke-width="1.1"/><path d="M975.8,647.3H979.6" stroke="#3c9a46" stroke-width="1.1" stroke-linecap="round"/></g>
<path d="M467,467.2 C490,463 520,461 560,457 C610,451 640,442 665,432 C690,422 705,413 723.3,408.6" fill="none" stroke="#2b9bc4" stroke-width="1.5" stroke-linecap="round"/><path d="M467,467.2 L521,471.5" fill="none" stroke="#2b9bc4" stroke-opacity="0.25" stroke-width="1"/><circle cx="723.3" cy="408.6" r="5.4" fill="none" stroke="#ffffff" stroke-width="1.3"/><circle cx="723.3" cy="408.6" r="3.9" fill="#2a8ad0" fill-opacity="0.35" stroke="#2a8ad0" stroke-width="1.6"/>
<path d="M349,24H982.5A6,6 0 0 1 988.5,30V59.3H349Z" fill="#1b1d26"/><g transform="translate(937.2,36.4) scale(0.9)"><path d="M5.2,0H2A2,2 0 0 0 0,2V9A2,2 0 0 0 2,11H4.8" fill="none" stroke="#d6d6d6" stroke-width="1.2" stroke-linecap="round"/><path d="M5.2,0L9.4,4.2V6.4 M5.2,0V2.8A1.4,1.4 0 0 0 6.6,4.2H9.4" fill="none" stroke="#d6d6d6" stroke-width="1.2" stroke-linecap="round" stroke-linejoin="round"/><path d="M9.8,9.2H5.4 M7,7.6L5.4,9.2L7,10.8" fill="none" stroke="#d6d6d6" stroke-width="1.2" stroke-linecap="round" stroke-linejoin="round"/></g><g transform="translate(962.6,36.4) scale(0.9)"><path d="M5.2,0H2A2,2 0 0 0 0,2V9A2,2 0 0 0 2,11H4.8" fill="none" stroke="#d6d6d6" stroke-width="1.2" stroke-linecap="round"/><path d="M5.2,0L9.4,4.2V6.4 M5.2,0V2.8A1.4,1.4 0 0 0 6.6,4.2H9.4" fill="none" stroke="#d6d6d6" stroke-width="1.2" stroke-linecap="round" stroke-linejoin="round"/><path d="M5.4,9.2H9.8 M8.2,7.6L9.8,9.2L8.2,10.8" fill="none" stroke="#d6d6d6" stroke-width="1.2" stroke-linecap="round" stroke-linejoin="round"/></g>
</svg>
<div id="txt"><div class="t" style="left:89.40px;top:59.48px;font-size:11.6px;font-weight:700;color:#f4f4f4;letter-spacing:0.1px;">Bolt</div><div class="t" style="left:90.60px;top:109.25px;font-size:8.8px;font-weight:400;color:#e2e2e2;letter-spacing:0.03px;">Dashboard</div><div class="t" style="left:90.60px;top:144.75px;font-size:8.8px;font-weight:400;color:#e2e2e2;letter-spacing:0.03px;">Calibration</div><div class="t" style="left:90.60px;top:180.25px;font-size:8.8px;font-weight:400;color:#e2e2e2;letter-spacing:0.03px;">Data Logging</div><div class="t" style="left:90.60px;top:215.75px;font-size:8.8px;font-weight:400;color:#e2e2e2;letter-spacing:0.03px;">Plugin</div><div class="t" style="left:90.60px;top:251.25px;font-size:8.8px;font-weight:400;color:#e2e2e2;letter-spacing:0.03px;">Map</div><div class="t" style="left:90.60px;top:286.75px;font-size:8.8px;font-weight:400;color:#e2e2e2;letter-spacing:0.03px;">Tools &amp; Utilities</div><div class="t" style="left:90.60px;top:322.25px;font-size:8.8px;font-weight:400;color:#e2e2e2;letter-spacing:0.03px;">Firmware update</div><div class="t" style="left:90.60px;top:357.75px;font-size:8.8px;font-weight:400;color:#e2e2e2;letter-spacing:0.03px;">Settings</div><div class="t" style="left:206.00px;top:40.06px;font-size:8.2px;font-weight:400;color:#d4d4d4;letter-spacing:0.3px;">Search</div><div class="t" style="left:207.20px;top:71.05px;font-size:8.8px;font-weight:400;color:#e4e4e4;letter-spacing:0.2px;">General</div><div class="t" style="left:207.20px;top:172.65px;font-size:8.8px;font-weight:400;color:#e4e4e4;letter-spacing:0.2px;">CANBUS</div><div class="t" style="left:207.20px;top:223.45px;font-size:8.8px;font-weight:400;color:#e4e4e4;letter-spacing:0.2px;">Drive Inverters</div><div class="t" style="left:207.20px;top:299.65px;font-size:8.8px;font-weight:400;color:#e4e4e4;letter-spacing:0.2px;">Battery</div><div class="t" style="left:207.20px;top:401.25px;font-size:8.8px;font-weight:400;color:#e4e4e4;letter-spacing:0.2px;">I/O</div><div class="t" style="left:217.20px;top:96.55px;font-size:8.8px;font-weight:400;color:#e4e4e4;letter-spacing:0.2px;">Settings</div><div class="t" style="left:217.20px;top:122.05px;font-size:8.8px;font-weight:400;color:#e4e4e4;letter-spacing:0.2px;">Logging</div><div class="t" style="left:217.20px;top:147.45px;font-size:8.8px;font-weight:400;color:#e4e4e4;letter-spacing:0.2px;">Plugin</div><div class="t" style="left:217.20px;top:198.05px;font-size:8.8px;font-weight:400;color:#e4e4e4;letter-spacing:0.2px;">Settings</div><div class="t" style="left:217.20px;top:248.65px;font-size:8.8px;font-weight:400;color:#e4e4e4;letter-spacing:0.2px;">Settings</div><div class="t" style="left:217.20px;top:274.25px;font-size:8.8px;font-weight:400;color:#e4e4e4;letter-spacing:0.2px;">Driving modes</div><div class="t" style="left:217.20px;top:325.05px;font-size:8.8px;font-weight:400;color:#e4e4e4;letter-spacing:0.2px;">Settings</div><div class="t" style="left:217.20px;top:350.45px;font-size:8.8px;font-weight:400;color:#e4e4e4;letter-spacing:0.2px;">BMS satellites</div><div class="t" style="left:217.20px;top:375.85px;font-size:8.8px;font-weight:400;color:#e4e4e4;letter-spacing:0.2px;">Onboard charger</div><div class="t" style="left:217.20px;top:426.65px;font-size:8.8px;font-weight:400;color:#e4e4e4;letter-spacing:0.2px;">I/O summary</div><div class="t" style="left:217.20px;top:452.05px;font-size:8.8px;font-weight:400;color:#e4e4e4;letter-spacing:0.2px;">Accelerator pedal</div><div class="t" style="left:217.20px;top:477.45px;font-size:8.8px;font-weight:400;color:#e4e4e4;letter-spacing:0.2px;">Shifter</div><div class="t" style="left:217.20px;top:502.85px;font-size:8.8px;font-weight:400;color:#e4e4e4;letter-spacing:0.2px;">Brake</div><div class="t" style="left:217.20px;top:528.25px;font-size:8.8px;font-weight:400;color:#e4e4e4;letter-spacing:0.2px;">Gauges</div><div class="t" style="left:217.20px;top:553.65px;font-size:8.8px;font-weight:400;color:#e4e4e4;letter-spacing:0.2px;">Thermistors</div><div class="t" style="left:217.20px;top:579.05px;font-size:8.8px;font-weight:400;color:#e4e4e4;letter-spacing:0.2px;">CAN keypad</div><div class="t" style="left:217.20px;top:604.45px;font-size:8.8px;font-weight:400;color:#e4e4e4;letter-spacing:0.2px;">Digital inputs</div><div class="t" style="left:217.20px;top:629.85px;font-size:8.8px;font-weight:400;color:#e4e4e4;letter-spacing:0.2px;">Digital outputs</div><div class="t" style="left:396.00px;top:81.74px;font-size:8.7px;font-weight:400;color:#e2e2e2;letter-spacing:0.0px;">Cooling fan off temp</div><div class="t" style="left:395.80px;top:119.74px;font-size:8.7px;font-weight:400;color:#e2e2e2;letter-spacing:0.0px;">Speed scaler</div><div class="t" style="left:395.80px;top:157.65px;font-size:8.8px;font-weight:400;color:#e2e2e2;letter-spacing:0.15px;">Invert direction</div><div class="t" style="left:843.80px;top:82.96px;font-size:8.2px;font-weight:400;color:#e0e0e0;letter-spacing:0.1px;">61</div><div class="t" style="left:843.80px;top:120.96px;font-size:8.2px;font-weight:400;color:#e0e0e0;letter-spacing:0.1px;">86.00</div><div class="t" style="left:907.80px;top:81.47px;font-size:7.6px;font-weight:400;color:#d0d0d0;letter-spacing:0px;">C</div><div class="t" style="left:415.90px;top:223.04px;font-size:8.7px;font-weight:700;color:#f0f0f0;letter-spacing:0.0px;">Torque Map</div><div class="t" style="left:404.00px;top:258.02px;font-size:8.6px;font-weight:400;color:#d8d8d8;letter-spacing:0.12px;">Map Tools</div><div class="t" style="left:396.20px;width:41.4px;text-align:center;top:289.65px;font-size:8.5px;font-weight:400;color:#ececec;letter-spacing:0.35px;-webkit-text-stroke:0.1px #ececec">100</div><div class="t" style="left:437.60px;width:42.0px;text-align:center;top:289.65px;font-size:8.5px;font-weight:400;color:#f4f4f4;letter-spacing:0.35px;-webkit-text-stroke:0.08px #f4f4f4">20</div><div class="t" style="left:479.60px;width:42.0px;text-align:center;top:289.65px;font-size:8.5px;font-weight:400;color:#f4f4f4;letter-spacing:0.35px;-webkit-text-stroke:0.08px #f4f4f4">20</div><div class="t" style="left:521.60px;width:42.0px;text-align:center;top:289.65px;font-size:8.5px;font-weight:400;color:#f4f4f4;letter-spacing:0.35px;-webkit-text-stroke:0.08px #f4f4f4">20</div><div class="t" style="left:563.60px;width:42.0px;text-align:center;top:289.65px;font-size:8.5px;font-weight:400;color:#f4f4f4;letter-spacing:0.35px;-webkit-text-stroke:0.08px #f4f4f4">20</div><div class="t" style="left:605.60px;width:42.0px;text-align:center;top:289.65px;font-size:8.5px;font-weight:400;color:#f4f4f4;letter-spacing:0.35px;-webkit-text-stroke:0.08px #f4f4f4">20</div><div class="t" style="left:647.60px;width:42.0px;text-align:center;top:289.65px;font-size:8.5px;font-weight:400;color:#f4f4f4;letter-spacing:0.35px;-webkit-text-stroke:0.08px #f4f4f4">20</div><div class="t" style="left:689.60px;width:42.0px;text-align:center;top:289.65px;font-size:8.5px;font-weight:400;color:#f4f4f4;letter-spacing:0.35px;-webkit-text-stroke:0.08px #f4f4f4">20</div><div class="t" style="left:731.60px;width:42.0px;text-align:center;top:289.65px;font-size:8.5px;font-weight:400;color:#f4f4f4;letter-spacing:0.35px;-webkit-text-stroke:0.08px #f4f4f4">20</div><div class="t" style="left:773.60px;width:42.0px;text-align:center;top:289.65px;font-size:8.5px;font-weight:400;color:#f4f4f4;letter-spacing:0.35px;-webkit-text-stroke:0.08px #f4f4f4">20</div><div class="t" style="left:815.60px;width:42.0px;text-align:center;top:289.65px;font-size:8.5px;font-weight:400;color:#f4f4f4;letter-spacing:0.35px;-webkit-text-stroke:0.08px #f4f4f4">20</div><div class="t" style="left:857.60px;width:42.0px;text-align:center;top:289.65px;font-size:8.5px;font-weight:400;color:#f4f4f4;letter-spacing:0.35px;-webkit-text-stroke:0.08px #f4f4f4">20</div><div class="t" style="left:899.60px;width:42.0px;text-align:center;top:289.65px;font-size:8.5px;font-weight:400;color:#f4f4f4;letter-spacing:0.35px;-webkit-text-stroke:0.08px #f4f4f4">20</div><div class="t" style="left:396.20px;width:41.4px;text-align:center;top:313.75px;font-size:8.5px;font-weight:400;color:#ececec;letter-spacing:0.35px;-webkit-text-stroke:0.1px #ececec">95</div><div class="t" style="left:437.60px;width:42.0px;text-align:center;top:313.75px;font-size:8.5px;font-weight:400;color:#f4f4f4;letter-spacing:0.35px;-webkit-text-stroke:0.08px #f4f4f4">17</div><div class="t" style="left:479.60px;width:42.0px;text-align:center;top:313.75px;font-size:8.5px;font-weight:400;color:#f4f4f4;letter-spacing:0.35px;-webkit-text-stroke:0.08px #f4f4f4">16</div><div class="t" style="left:521.60px;width:42.0px;text-align:center;top:313.75px;font-size:8.5px;font-weight:400;color:#f4f4f4;letter-spacing:0.35px;-webkit-text-stroke:0.08px #f4f4f4">16</div><div class="t" style="left:563.60px;width:42.0px;text-align:center;top:313.75px;font-size:8.5px;font-weight:400;color:#f4f4f4;letter-spacing:0.35px;-webkit-text-stroke:0.08px #f4f4f4">16</div><div class="t" style="left:605.60px;width:42.0px;text-align:center;top:313.75px;font-size:8.5px;font-weight:400;color:#f4f4f4;letter-spacing:0.35px;-webkit-text-stroke:0.08px #f4f4f4">16</div><div class="t" style="left:647.60px;width:42.0px;text-align:center;top:313.75px;font-size:8.5px;font-weight:400;color:#f4f4f4;letter-spacing:0.35px;-webkit-text-stroke:0.08px #f4f4f4">16</div><div class="t" style="left:689.60px;width:42.0px;text-align:center;top:313.75px;font-size:8.5px;font-weight:400;color:#f4f4f4;letter-spacing:0.35px;-webkit-text-stroke:0.08px #f4f4f4">16</div><div class="t" style="left:731.60px;width:42.0px;text-align:center;top:313.75px;font-size:8.5px;font-weight:400;color:#f4f4f4;letter-spacing:0.35px;-webkit-text-stroke:0.08px #f4f4f4">15</div><div class="t" style="left:773.60px;width:42.0px;text-align:center;top:313.75px;font-size:8.5px;font-weight:400;color:#f4f4f4;letter-spacing:0.35px;-webkit-text-stroke:0.08px #f4f4f4">15</div><div class="t" style="left:815.60px;width:42.0px;text-align:center;top:313.75px;font-size:8.5px;font-weight:400;color:#f4f4f4;letter-spacing:0.35px;-webkit-text-stroke:0.08px #f4f4f4">15</div><div class="t" style="left:857.60px;width:42.0px;text-align:center;top:313.75px;font-size:8.5px;font-weight:400;color:#f4f4f4;letter-spacing:0.35px;-webkit-text-stroke:0.08px #f4f4f4">15</div><div class="t" style="left:899.60px;width:42.0px;text-align:center;top:313.75px;font-size:8.5px;font-weight:400;color:#f4f4f4;letter-spacing:0.35px;-webkit-text-stroke:0.08px #f4f4f4">14</div><div class="t" style="left:396.20px;width:41.4px;text-align:center;top:337.85px;font-size:8.5px;font-weight:400;color:#ececec;letter-spacing:0.35px;-webkit-text-stroke:0.1px #ececec">85</div><div class="t" style="left:437.60px;width:42.0px;text-align:center;top:337.85px;font-size:8.5px;font-weight:400;color:#f4f4f4;letter-spacing:0.35px;-webkit-text-stroke:0.08px #f4f4f4">14</div><div class="t" style="left:479.60px;width:42.0px;text-align:center;top:337.85px;font-size:8.5px;font-weight:400;color:#f4f4f4;letter-spacing:0.35px;-webkit-text-stroke:0.08px #f4f4f4">12</div><div class="t" style="left:521.60px;width:42.0px;text-align:center;top:337.85px;font-size:8.5px;font-weight:400;color:#f4f4f4;letter-spacing:0.35px;-webkit-text-stroke:0.08px #f4f4f4">12</div><div class="t" style="left:563.60px;width:42.0px;text-align:center;top:337.85px;font-size:8.5px;font-weight:400;color:#f4f4f4;letter-spacing:0.35px;-webkit-text-stroke:0.08px #f4f4f4">12</div><div class="t" style="left:605.60px;width:42.0px;text-align:center;top:337.85px;font-size:8.5px;font-weight:400;color:#f4f4f4;letter-spacing:0.35px;-webkit-text-stroke:0.08px #f4f4f4">12</div><div class="t" style="left:647.60px;width:42.0px;text-align:center;top:337.85px;font-size:8.5px;font-weight:400;color:#f4f4f4;letter-spacing:0.35px;-webkit-text-stroke:0.08px #f4f4f4">12</div><div class="t" style="left:689.60px;width:42.0px;text-align:center;top:337.85px;font-size:8.5px;font-weight:400;color:#f4f4f4;letter-spacing:0.35px;-webkit-text-stroke:0.08px #f4f4f4">11</div><div class="t" style="left:731.60px;width:42.0px;text-align:center;top:337.85px;font-size:8.5px;font-weight:400;color:#f4f4f4;letter-spacing:0.35px;-webkit-text-stroke:0.08px #f4f4f4">11</div><div class="t" style="left:773.60px;width:42.0px;text-align:center;top:337.85px;font-size:8.5px;font-weight:400;color:#f4f4f4;letter-spacing:0.35px;-webkit-text-stroke:0.08px #f4f4f4">11</div><div class="t" style="left:815.60px;width:42.0px;text-align:center;top:337.85px;font-size:8.5px;font-weight:400;color:#f4f4f4;letter-spacing:0.35px;-webkit-text-stroke:0.08px #f4f4f4">10</div><div class="t" style="left:857.60px;width:42.0px;text-align:center;top:337.85px;font-size:8.5px;font-weight:400;color:#f4f4f4;letter-spacing:0.35px;-webkit-text-stroke:0.08px #f4f4f4">10</div><div class="t" style="left:899.60px;width:42.0px;text-align:center;top:337.85px;font-size:8.5px;font-weight:400;color:#f4f4f4;letter-spacing:0.35px;-webkit-text-stroke:0.08px #f4f4f4">10</div><div class="t" style="left:396.20px;width:41.4px;text-align:center;top:361.95px;font-size:8.5px;font-weight:400;color:#ececec;letter-spacing:0.35px;-webkit-text-stroke:0.1px #ececec">75</div><div class="t" style="left:437.60px;width:42.0px;text-align:center;top:361.95px;font-size:8.5px;font-weight:400;color:#f4f4f4;letter-spacing:0.35px;-webkit-text-stroke:0.08px #f4f4f4">12</div><div class="t" style="left:479.60px;width:42.0px;text-align:center;top:361.95px;font-size:8.5px;font-weight:400;color:#f4f4f4;letter-spacing:0.35px;-webkit-text-stroke:0.08px #f4f4f4">10</div><div class="t" style="left:521.60px;width:42.0px;text-align:center;top:361.95px;font-size:8.5px;font-weight:400;color:#f4f4f4;letter-spacing:0.35px;-webkit-text-stroke:0.08px #f4f4f4">10</div><div class="t" style="left:563.60px;width:42.0px;text-align:center;top:361.95px;font-size:8.5px;font-weight:400;color:#f4f4f4;letter-spacing:0.35px;-webkit-text-stroke:0.08px #f4f4f4">10</div><div class="t" style="left:605.60px;width:42.0px;text-align:center;top:361.95px;font-size:8.5px;font-weight:400;color:#f4f4f4;letter-spacing:0.35px;-webkit-text-stroke:0.08px #f4f4f4">9</div><div class="t" style="left:647.60px;width:42.0px;text-align:center;top:361.95px;font-size:8.5px;font-weight:400;color:#f4f4f4;letter-spacing:0.35px;-webkit-text-stroke:0.08px #f4f4f4">9</div><div class="t" style="left:689.60px;width:42.0px;text-align:center;top:361.95px;font-size:8.5px;font-weight:400;color:#f4f4f4;letter-spacing:0.35px;-webkit-text-stroke:0.08px #f4f4f4">9</div><div class="t" style="left:731.60px;width:42.0px;text-align:center;top:361.95px;font-size:8.5px;font-weight:400;color:#f4f4f4;letter-spacing:0.35px;-webkit-text-stroke:0.08px #f4f4f4">9</div><div class="t" style="left:773.60px;width:42.0px;text-align:center;top:361.95px;font-size:8.5px;font-weight:400;color:#f4f4f4;letter-spacing:0.35px;-webkit-text-stroke:0.08px #f4f4f4">9</div><div class="t" style="left:815.60px;width:42.0px;text-align:center;top:361.95px;font-size:8.5px;font-weight:400;color:#f4f4f4;letter-spacing:0.35px;-webkit-text-stroke:0.08px #f4f4f4">9</div><div class="t" style="left:857.60px;width:42.0px;text-align:center;top:361.95px;font-size:8.5px;font-weight:400;color:#f4f4f4;letter-spacing:0.35px;-webkit-text-stroke:0.08px #f4f4f4">8</div><div class="t" style="left:899.60px;width:42.0px;text-align:center;top:361.95px;font-size:8.5px;font-weight:400;color:#f4f4f4;letter-spacing:0.35px;-webkit-text-stroke:0.08px #f4f4f4">8</div><div class="t" style="left:396.20px;width:41.4px;text-align:center;top:386.05px;font-size:8.5px;font-weight:400;color:#ececec;letter-spacing:0.35px;-webkit-text-stroke:0.1px #ececec">70</div><div class="t" style="left:437.60px;width:42.0px;text-align:center;top:386.05px;font-size:8.5px;font-weight:400;color:#f4f4f4;letter-spacing:0.35px;-webkit-text-stroke:0.08px #f4f4f4">11</div><div class="t" style="left:479.60px;width:42.0px;text-align:center;top:386.05px;font-size:8.5px;font-weight:400;color:#f4f4f4;letter-spacing:0.35px;-webkit-text-stroke:0.08px #f4f4f4">9</div><div class="t" style="left:521.60px;width:42.0px;text-align:center;top:386.05px;font-size:8.5px;font-weight:400;color:#f4f4f4;letter-spacing:0.35px;-webkit-text-stroke:0.08px #f4f4f4">8</div><div class="t" style="left:563.60px;width:42.0px;text-align:center;top:386.05px;font-size:8.5px;font-weight:400;color:#f4f4f4;letter-spacing:0.35px;-webkit-text-stroke:0.08px #f4f4f4">8</div><div class="t" style="left:605.60px;width:42.0px;text-align:center;top:386.05px;font-size:8.5px;font-weight:400;color:#f4f4f4;letter-spacing:0.35px;-webkit-text-stroke:0.08px #f4f4f4">7</div><div class="t" style="left:647.60px;width:42.0px;text-align:center;top:386.05px;font-size:8.5px;font-weight:400;color:#f4f4f4;letter-spacing:0.35px;-webkit-text-stroke:0.08px #f4f4f4">7</div><div class="t" style="left:689.60px;width:42.0px;text-align:center;top:386.05px;font-size:8.5px;font-weight:400;color:#f4f4f4;letter-spacing:0.35px;-webkit-text-stroke:0.08px #f4f4f4">7</div><div class="t" style="left:731.60px;width:42.0px;text-align:center;top:386.05px;font-size:8.5px;font-weight:400;color:#f4f4f4;letter-spacing:0.35px;-webkit-text-stroke:0.08px #f4f4f4">7</div><div class="t" style="left:773.60px;width:42.0px;text-align:center;top:386.05px;font-size:8.5px;font-weight:400;color:#f4f4f4;letter-spacing:0.35px;-webkit-text-stroke:0.08px #f4f4f4">7</div><div class="t" style="left:815.60px;width:42.0px;text-align:center;top:386.05px;font-size:8.5px;font-weight:400;color:#f4f4f4;letter-spacing:0.35px;-webkit-text-stroke:0.08px #f4f4f4">7</div><div class="t" style="left:857.60px;width:42.0px;text-align:center;top:386.05px;font-size:8.5px;font-weight:400;color:#f4f4f4;letter-spacing:0.35px;-webkit-text-stroke:0.08px #f4f4f4">6</div><div class="t" style="left:899.60px;width:42.0px;text-align:center;top:386.05px;font-size:8.5px;font-weight:400;color:#f4f4f4;letter-spacing:0.35px;-webkit-text-stroke:0.08px #f4f4f4">6</div><div class="t" style="left:396.20px;width:41.4px;text-align:center;top:410.15px;font-size:8.5px;font-weight:400;color:#ececec;letter-spacing:0.35px;-webkit-text-stroke:0.1px #ececec">60</div><div class="t" style="left:437.60px;width:42.0px;text-align:center;top:410.15px;font-size:8.5px;font-weight:400;color:#f4f4f4;letter-spacing:0.35px;-webkit-text-stroke:0.08px #f4f4f4">10</div><div class="t" style="left:479.60px;width:42.0px;text-align:center;top:410.15px;font-size:8.5px;font-weight:400;color:#f4f4f4;letter-spacing:0.35px;-webkit-text-stroke:0.08px #f4f4f4">7</div><div class="t" style="left:521.60px;width:42.0px;text-align:center;top:410.15px;font-size:8.5px;font-weight:400;color:#f4f4f4;letter-spacing:0.35px;-webkit-text-stroke:0.08px #f4f4f4">6</div><div class="t" style="left:563.60px;width:42.0px;text-align:center;top:410.15px;font-size:8.5px;font-weight:400;color:#f4f4f4;letter-spacing:0.35px;-webkit-text-stroke:0.08px #f4f4f4">6</div><div class="t" style="left:605.60px;width:42.0px;text-align:center;top:410.15px;font-size:8.5px;font-weight:400;color:#f4f4f4;letter-spacing:0.35px;-webkit-text-stroke:0.08px #f4f4f4">5</div><div class="t" style="left:647.60px;width:42.0px;text-align:center;top:410.15px;font-size:8.5px;font-weight:400;color:#f4f4f4;letter-spacing:0.35px;-webkit-text-stroke:0.08px #f4f4f4">5</div><div class="t" style="left:689.60px;width:42.0px;text-align:center;top:410.15px;font-size:8.5px;font-weight:400;color:#f4f4f4;letter-spacing:0.35px;-webkit-text-stroke:0.08px #f4f4f4">5</div><div class="t" style="left:731.60px;width:42.0px;text-align:center;top:410.15px;font-size:8.5px;font-weight:400;color:#f4f4f4;letter-spacing:0.35px;-webkit-text-stroke:0.08px #f4f4f4">5</div><div class="t" style="left:773.60px;width:42.0px;text-align:center;top:410.15px;font-size:8.5px;font-weight:400;color:#f4f4f4;letter-spacing:0.35px;-webkit-text-stroke:0.08px #f4f4f4">5</div><div class="t" style="left:815.60px;width:42.0px;text-align:center;top:410.15px;font-size:8.5px;font-weight:400;color:#f4f4f4;letter-spacing:0.35px;-webkit-text-stroke:0.08px #f4f4f4">4</div><div class="t" style="left:857.60px;width:42.0px;text-align:center;top:410.15px;font-size:8.5px;font-weight:400;color:#f4f4f4;letter-spacing:0.35px;-webkit-text-stroke:0.08px #f4f4f4">4</div><div class="t" style="left:899.60px;width:42.0px;text-align:center;top:410.15px;font-size:8.5px;font-weight:400;color:#f4f4f4;letter-spacing:0.35px;-webkit-text-stroke:0.08px #f4f4f4">3</div><div class="t" style="left:396.20px;width:41.4px;text-align:center;top:434.25px;font-size:8.5px;font-weight:400;color:#ececec;letter-spacing:0.35px;-webkit-text-stroke:0.1px #ececec">50</div><div class="t" style="left:437.60px;width:42.0px;text-align:center;top:434.25px;font-size:8.5px;font-weight:400;color:#f4f4f4;letter-spacing:0.35px;-webkit-text-stroke:0.08px #f4f4f4">9</div><div class="t" style="left:479.60px;width:42.0px;text-align:center;top:434.25px;font-size:8.5px;font-weight:400;color:#f4f4f4;letter-spacing:0.35px;-webkit-text-stroke:0.08px #f4f4f4">6</div><div class="t" style="left:521.60px;width:42.0px;text-align:center;top:434.25px;font-size:8.5px;font-weight:400;color:#f4f4f4;letter-spacing:0.35px;-webkit-text-stroke:0.08px #f4f4f4">4</div><div class="t" style="left:563.60px;width:42.0px;text-align:center;top:434.25px;font-size:8.5px;font-weight:400;color:#f4f4f4;letter-spacing:0.35px;-webkit-text-stroke:0.08px #f4f4f4">4</div><div class="t" style="left:605.60px;width:42.0px;text-align:center;top:434.25px;font-size:8.5px;font-weight:400;color:#f4f4f4;letter-spacing:0.35px;-webkit-text-stroke:0.08px #f4f4f4">3</div><div class="t" style="left:647.60px;width:42.0px;text-align:center;top:434.25px;font-size:8.5px;font-weight:400;color:#f4f4f4;letter-spacing:0.35px;-webkit-text-stroke:0.08px #f4f4f4">3</div><div class="t" style="left:689.60px;width:42.0px;text-align:center;top:434.25px;font-size:8.5px;font-weight:400;color:#f4f4f4;letter-spacing:0.35px;-webkit-text-stroke:0.08px #f4f4f4">3</div><div class="t" style="left:731.60px;width:42.0px;text-align:center;top:434.25px;font-size:8.5px;font-weight:400;color:#f4f4f4;letter-spacing:0.35px;-webkit-text-stroke:0.08px #f4f4f4">3</div><div class="t" style="left:773.60px;width:42.0px;text-align:center;top:434.25px;font-size:8.5px;font-weight:400;color:#f4f4f4;letter-spacing:0.35px;-webkit-text-stroke:0.08px #f4f4f4">3</div><div class="t" style="left:815.60px;width:42.0px;text-align:center;top:434.25px;font-size:8.5px;font-weight:400;color:#f4f4f4;letter-spacing:0.35px;-webkit-text-stroke:0.08px #f4f4f4">2</div><div class="t" style="left:857.60px;width:42.0px;text-align:center;top:434.25px;font-size:8.5px;font-weight:400;color:#f4f4f4;letter-spacing:0.35px;-webkit-text-stroke:0.08px #f4f4f4">1</div><div class="t" style="left:899.60px;width:42.0px;text-align:center;top:434.25px;font-size:8.5px;font-weight:400;color:#f4f4f4;letter-spacing:0.35px;-webkit-text-stroke:0.08px #f4f4f4">0</div><div class="t" style="left:396.20px;width:41.4px;text-align:center;top:458.35px;font-size:8.5px;font-weight:400;color:#ececec;letter-spacing:0.35px;-webkit-text-stroke:0.1px #ececec">35</div><div class="t" style="left:437.60px;width:42.0px;text-align:center;top:458.35px;font-size:8.5px;font-weight:400;color:#f4f4f4;letter-spacing:0.35px;-webkit-text-stroke:0.08px #f4f4f4">7</div><div class="t" style="left:479.60px;width:42.0px;text-align:center;top:458.35px;font-size:8.5px;font-weight:400;color:#f4f4f4;letter-spacing:0.35px;-webkit-text-stroke:0.08px #f4f4f4">4</div><div class="t" style="left:521.60px;width:42.0px;text-align:center;top:458.35px;font-size:8.5px;font-weight:400;color:#f4f4f4;letter-spacing:0.35px;-webkit-text-stroke:0.08px #f4f4f4">2</div><div class="t" style="left:563.60px;width:42.0px;text-align:center;top:458.35px;font-size:8.5px;font-weight:400;color:#f4f4f4;letter-spacing:0.35px;-webkit-text-stroke:0.08px #f4f4f4">2</div><div class="t" style="left:605.60px;width:42.0px;text-align:center;top:458.35px;font-size:8.5px;font-weight:400;color:#f4f4f4;letter-spacing:0.35px;-webkit-text-stroke:0.08px #f4f4f4">1</div><div class="t" style="left:647.60px;width:42.0px;text-align:center;top:458.35px;font-size:8.5px;font-weight:400;color:#f4f4f4;letter-spacing:0.35px;-webkit-text-stroke:0.08px #f4f4f4">1</div><div class="t" style="left:689.60px;width:42.0px;text-align:center;top:458.35px;font-size:8.5px;font-weight:400;color:#f4f4f4;letter-spacing:0.35px;-webkit-text-stroke:0.08px #f4f4f4">1</div><div class="t" style="left:731.60px;width:42.0px;text-align:center;top:458.35px;font-size:8.5px;font-weight:400;color:#f4f4f4;letter-spacing:0.35px;-webkit-text-stroke:0.08px #f4f4f4">0</div><div class="t" style="left:773.60px;width:42.0px;text-align:center;top:458.35px;font-size:8.5px;font-weight:400;color:#f4f4f4;letter-spacing:0.35px;-webkit-text-stroke:0.08px #f4f4f4">0</div><div class="t" style="left:815.60px;width:42.0px;text-align:center;top:458.35px;font-size:8.5px;font-weight:400;color:#f4f4f4;letter-spacing:0.35px;-webkit-text-stroke:0.08px #f4f4f4">-1</div><div class="t" style="left:857.60px;width:42.0px;text-align:center;top:458.35px;font-size:8.5px;font-weight:400;color:#f4f4f4;letter-spacing:0.35px;-webkit-text-stroke:0.08px #f4f4f4">-2</div><div class="t" style="left:899.60px;width:42.0px;text-align:center;top:458.35px;font-size:8.5px;font-weight:400;color:#f4f4f4;letter-spacing:0.35px;-webkit-text-stroke:0.08px #f4f4f4">-3</div><div class="t" style="left:396.20px;width:41.4px;text-align:center;top:482.45px;font-size:8.5px;font-weight:400;color:#ececec;letter-spacing:0.35px;-webkit-text-stroke:0.1px #ececec">25</div><div class="t" style="left:437.60px;width:42.0px;text-align:center;top:482.45px;font-size:8.5px;font-weight:400;color:#f4f4f4;letter-spacing:0.35px;-webkit-text-stroke:0.08px #f4f4f4">6</div><div class="t" style="left:479.60px;width:42.0px;text-align:center;top:482.45px;font-size:8.5px;font-weight:400;color:#f4f4f4;letter-spacing:0.35px;-webkit-text-stroke:0.08px #f4f4f4">2</div><div class="t" style="left:521.60px;width:42.0px;text-align:center;top:482.45px;font-size:8.5px;font-weight:400;color:#f4f4f4;letter-spacing:0.35px;-webkit-text-stroke:0.08px #f4f4f4">0</div><div class="t" style="left:563.60px;width:42.0px;text-align:center;top:482.45px;font-size:8.5px;font-weight:400;color:#f4f4f4;letter-spacing:0.35px;-webkit-text-stroke:0.08px #f4f4f4">0</div><div class="t" style="left:605.60px;width:42.0px;text-align:center;top:482.45px;font-size:8.5px;font-weight:400;color:#f4f4f4;letter-spacing:0.35px;-webkit-text-stroke:0.08px #f4f4f4">-1</div><div class="t" style="left:647.60px;width:42.0px;text-align:center;top:482.45px;font-size:8.5px;font-weight:400;color:#f4f4f4;letter-spacing:0.35px;-webkit-text-stroke:0.08px #f4f4f4">-1</div><div class="t" style="left:689.60px;width:42.0px;text-align:center;top:482.45px;font-size:8.5px;font-weight:400;color:#f4f4f4;letter-spacing:0.35px;-webkit-text-stroke:0.08px #f4f4f4">-1</div><div class="t" style="left:731.60px;width:42.0px;text-align:center;top:482.45px;font-size:8.5px;font-weight:400;color:#f4f4f4;letter-spacing:0.35px;-webkit-text-stroke:0.08px #f4f4f4">-2</div><div class="t" style="left:773.60px;width:42.0px;text-align:center;top:482.45px;font-size:8.5px;font-weight:400;color:#f4f4f4;letter-spacing:0.35px;-webkit-text-stroke:0.08px #f4f4f4">-3</div><div class="t" style="left:815.60px;width:42.0px;text-align:center;top:482.45px;font-size:8.5px;font-weight:400;color:#f4f4f4;letter-spacing:0.35px;-webkit-text-stroke:0.08px #f4f4f4">-4</div><div class="t" style="left:857.60px;width:42.0px;text-align:center;top:482.45px;font-size:8.5px;font-weight:400;color:#f4f4f4;letter-spacing:0.35px;-webkit-text-stroke:0.08px #f4f4f4">-5</div><div class="t" style="left:899.60px;width:42.0px;text-align:center;top:482.45px;font-size:8.5px;font-weight:400;color:#f4f4f4;letter-spacing:0.35px;-webkit-text-stroke:0.08px #f4f4f4">-6</div><div class="t" style="left:396.20px;width:41.4px;text-align:center;top:506.55px;font-size:8.5px;font-weight:400;color:#ececec;letter-spacing:0.35px;-webkit-text-stroke:0.1px #ececec">15</div><div class="t" style="left:437.60px;width:42.0px;text-align:center;top:506.55px;font-size:8.5px;font-weight:400;color:#f4f4f4;letter-spacing:0.35px;-webkit-text-stroke:0.08px #f4f4f4">4</div><div class="t" style="left:479.60px;width:42.0px;text-align:center;top:506.55px;font-size:8.5px;font-weight:400;color:#f4f4f4;letter-spacing:0.35px;-webkit-text-stroke:0.08px #f4f4f4">0</div><div class="t" style="left:521.60px;width:42.0px;text-align:center;top:506.55px;font-size:8.5px;font-weight:400;color:#f4f4f4;letter-spacing:0.35px;-webkit-text-stroke:0.08px #f4f4f4">-1</div><div class="t" style="left:563.60px;width:42.0px;text-align:center;top:506.55px;font-size:8.5px;font-weight:400;color:#f4f4f4;letter-spacing:0.35px;-webkit-text-stroke:0.08px #f4f4f4">-2</div><div class="t" style="left:605.60px;width:42.0px;text-align:center;top:506.55px;font-size:8.5px;font-weight:400;color:#f4f4f4;letter-spacing:0.35px;-webkit-text-stroke:0.08px #f4f4f4">-3</div><div class="t" style="left:647.60px;width:42.0px;text-align:center;top:506.55px;font-size:8.5px;font-weight:400;color:#f4f4f4;letter-spacing:0.35px;-webkit-text-stroke:0.08px #f4f4f4">-3</div><div class="t" style="left:689.60px;width:42.0px;text-align:center;top:506.55px;font-size:8.5px;font-weight:400;color:#f4f4f4;letter-spacing:0.35px;-webkit-text-stroke:0.08px #f4f4f4">-4</div><div class="t" style="left:731.60px;width:42.0px;text-align:center;top:506.55px;font-size:8.5px;font-weight:400;color:#f4f4f4;letter-spacing:0.35px;-webkit-text-stroke:0.08px #f4f4f4">-5</div><div class="t" style="left:773.60px;width:42.0px;text-align:center;top:506.55px;font-size:8.5px;font-weight:400;color:#f4f4f4;letter-spacing:0.35px;-webkit-text-stroke:0.08px #f4f4f4">-6</div><div class="t" style="left:815.60px;width:42.0px;text-align:center;top:506.55px;font-size:8.5px;font-weight:400;color:#f4f4f4;letter-spacing:0.35px;-webkit-text-stroke:0.08px #f4f4f4">-7</div><div class="t" style="left:857.60px;width:42.0px;text-align:center;top:506.55px;font-size:8.5px;font-weight:400;color:#f4f4f4;letter-spacing:0.35px;-webkit-text-stroke:0.08px #f4f4f4">-8</div><div class="t" style="left:899.60px;width:42.0px;text-align:center;top:506.55px;font-size:8.5px;font-weight:400;color:#f4f4f4;letter-spacing:0.35px;-webkit-text-stroke:0.08px #f4f4f4">-10</div><div class="t" style="left:396.20px;width:41.4px;text-align:center;top:530.65px;font-size:8.5px;font-weight:400;color:#ececec;letter-spacing:0.35px;-webkit-text-stroke:0.1px #ececec">10</div><div class="t" style="left:437.60px;width:42.0px;text-align:center;top:530.65px;font-size:8.5px;font-weight:400;color:#f4f4f4;letter-spacing:0.35px;-webkit-text-stroke:0.08px #f4f4f4">2</div><div class="t" style="left:479.60px;width:42.0px;text-align:center;top:530.65px;font-size:8.5px;font-weight:400;color:#f4f4f4;letter-spacing:0.35px;-webkit-text-stroke:0.08px #f4f4f4">-1</div><div class="t" style="left:521.60px;width:42.0px;text-align:center;top:530.65px;font-size:8.5px;font-weight:400;color:#f4f4f4;letter-spacing:0.35px;-webkit-text-stroke:0.08px #f4f4f4">-3</div><div class="t" style="left:563.60px;width:42.0px;text-align:center;top:530.65px;font-size:8.5px;font-weight:400;color:#f4f4f4;letter-spacing:0.35px;-webkit-text-stroke:0.08px #f4f4f4">-4</div><div class="t" style="left:605.60px;width:42.0px;text-align:center;top:530.65px;font-size:8.5px;font-weight:400;color:#f4f4f4;letter-spacing:0.35px;-webkit-text-stroke:0.08px #f4f4f4">-5</div><div class="t" style="left:647.60px;width:42.0px;text-align:center;top:530.65px;font-size:8.5px;font-weight:400;color:#f4f4f4;letter-spacing:0.35px;-webkit-text-stroke:0.08px #f4f4f4">-6</div><div class="t" style="left:689.60px;width:42.0px;text-align:center;top:530.65px;font-size:8.5px;font-weight:400;color:#f4f4f4;letter-spacing:0.35px;-webkit-text-stroke:0.08px #f4f4f4">-7</div><div class="t" style="left:731.60px;width:42.0px;text-align:center;top:530.65px;font-size:8.5px;font-weight:400;color:#f4f4f4;letter-spacing:0.35px;-webkit-text-stroke:0.08px #f4f4f4">-8</div><div class="t" style="left:773.60px;width:42.0px;text-align:center;top:530.65px;font-size:8.5px;font-weight:400;color:#f4f4f4;letter-spacing:0.35px;-webkit-text-stroke:0.08px #f4f4f4">-10</div><div class="t" style="left:815.60px;width:42.0px;text-align:center;top:530.65px;font-size:8.5px;font-weight:400;color:#f4f4f4;letter-spacing:0.35px;-webkit-text-stroke:0.08px #f4f4f4">-12</div><div class="t" style="left:857.60px;width:42.0px;text-align:center;top:530.65px;font-size:8.5px;font-weight:400;color:#f4f4f4;letter-spacing:0.35px;-webkit-text-stroke:0.08px #f4f4f4">-13</div><div class="t" style="left:899.60px;width:42.0px;text-align:center;top:530.65px;font-size:8.5px;font-weight:400;color:#f4f4f4;letter-spacing:0.35px;-webkit-text-stroke:0.08px #f4f4f4">-15</div><div class="t" style="left:396.20px;width:41.4px;text-align:center;top:554.75px;font-size:8.5px;font-weight:400;color:#ececec;letter-spacing:0.35px;-webkit-text-stroke:0.1px #ececec">5</div><div class="t" style="left:437.60px;width:42.0px;text-align:center;top:554.75px;font-size:8.5px;font-weight:400;color:#f4f4f4;letter-spacing:0.35px;-webkit-text-stroke:0.08px #f4f4f4">0</div><div class="t" style="left:479.60px;width:42.0px;text-align:center;top:554.75px;font-size:8.5px;font-weight:400;color:#f4f4f4;letter-spacing:0.35px;-webkit-text-stroke:0.08px #f4f4f4">-3</div><div class="t" style="left:521.60px;width:42.0px;text-align:center;top:554.75px;font-size:8.5px;font-weight:400;color:#f4f4f4;letter-spacing:0.35px;-webkit-text-stroke:0.08px #f4f4f4">-5</div><div class="t" style="left:563.60px;width:42.0px;text-align:center;top:554.75px;font-size:8.5px;font-weight:400;color:#f4f4f4;letter-spacing:0.35px;-webkit-text-stroke:0.08px #f4f4f4">-6</div><div class="t" style="left:605.60px;width:42.0px;text-align:center;top:554.75px;font-size:8.5px;font-weight:400;color:#f4f4f4;letter-spacing:0.35px;-webkit-text-stroke:0.08px #f4f4f4">-8</div><div class="t" style="left:647.60px;width:42.0px;text-align:center;top:554.75px;font-size:8.5px;font-weight:400;color:#f4f4f4;letter-spacing:0.35px;-webkit-text-stroke:0.08px #f4f4f4">-9</div><div class="t" style="left:689.60px;width:42.0px;text-align:center;top:554.75px;font-size:8.5px;font-weight:400;color:#f4f4f4;letter-spacing:0.35px;-webkit-text-stroke:0.08px #f4f4f4">-10</div><div class="t" style="left:731.60px;width:42.0px;text-align:center;top:554.75px;font-size:8.5px;font-weight:400;color:#f4f4f4;letter-spacing:0.35px;-webkit-text-stroke:0.08px #f4f4f4">-12</div><div class="t" style="left:773.60px;width:42.0px;text-align:center;top:554.75px;font-size:8.5px;font-weight:400;color:#f4f4f4;letter-spacing:0.35px;-webkit-text-stroke:0.08px #f4f4f4">-14</div><div class="t" style="left:815.60px;width:42.0px;text-align:center;top:554.75px;font-size:8.5px;font-weight:400;color:#f4f4f4;letter-spacing:0.35px;-webkit-text-stroke:0.08px #f4f4f4">-16</div><div class="t" style="left:857.60px;width:42.0px;text-align:center;top:554.75px;font-size:8.5px;font-weight:400;color:#f4f4f4;letter-spacing:0.35px;-webkit-text-stroke:0.08px #f4f4f4">-18</div><div class="t" style="left:899.60px;width:42.0px;text-align:center;top:554.75px;font-size:8.5px;font-weight:400;color:#f4f4f4;letter-spacing:0.35px;-webkit-text-stroke:0.08px #f4f4f4">-20</div><div class="t" style="left:394.20px;width:45.4px;text-align:center;top:579.03px;font-size:8.0px;font-weight:400;color:#e0e0e0;letter-spacing:0.1px;">% / RPM</div><div class="t" style="left:437.60px;width:42.0px;text-align:center;top:578.60px;font-size:8.5px;font-weight:400;color:#ececec;letter-spacing:0.35px;-webkit-text-stroke:0.1px #ececec">0</div><div class="t" style="left:479.60px;width:42.0px;text-align:center;top:578.60px;font-size:8.5px;font-weight:400;color:#ececec;letter-spacing:0.35px;-webkit-text-stroke:0.1px #ececec">250</div><div class="t" style="left:521.60px;width:42.0px;text-align:center;top:578.60px;font-size:8.5px;font-weight:400;color:#ececec;letter-spacing:0.35px;-webkit-text-stroke:0.1px #ececec">500</div><div class="t" style="left:563.60px;width:42.0px;text-align:center;top:578.60px;font-size:8.5px;font-weight:400;color:#ececec;letter-spacing:0.35px;-webkit-text-stroke:0.1px #ececec">1000</div><div class="t" style="left:605.60px;width:42.0px;text-align:center;top:578.60px;font-size:8.5px;font-weight:400;color:#ececec;letter-spacing:0.35px;-webkit-text-stroke:0.1px #ececec">2000</div><div class="t" style="left:647.60px;width:42.0px;text-align:center;top:578.60px;font-size:8.5px;font-weight:400;color:#ececec;letter-spacing:0.35px;-webkit-text-stroke:0.1px #ececec">3000</div><div class="t" style="left:689.60px;width:42.0px;text-align:center;top:578.60px;font-size:8.5px;font-weight:400;color:#ececec;letter-spacing:0.35px;-webkit-text-stroke:0.1px #ececec">4000</div><div class="t" style="left:731.60px;width:42.0px;text-align:center;top:578.60px;font-size:8.5px;font-weight:400;color:#ececec;letter-spacing:0.35px;-webkit-text-stroke:0.1px #ececec">5000</div><div class="t" style="left:773.60px;width:42.0px;text-align:center;top:578.60px;font-size:8.5px;font-weight:400;color:#ececec;letter-spacing:0.35px;-webkit-text-stroke:0.1px #ececec">6000</div><div class="t" style="left:815.60px;width:42.0px;text-align:center;top:578.60px;font-size:8.5px;font-weight:400;color:#ececec;letter-spacing:0.35px;-webkit-text-stroke:0.1px #ececec">7000</div><div class="t" style="left:857.60px;width:42.0px;text-align:center;top:578.60px;font-size:8.5px;font-weight:400;color:#ececec;letter-spacing:0.35px;-webkit-text-stroke:0.1px #ececec">8000</div><div class="t" style="left:899.60px;width:42.0px;text-align:center;top:578.60px;font-size:8.5px;font-weight:400;color:#ececec;letter-spacing:0.35px;-webkit-text-stroke:0.1px #ececec">10000</div><div class="t" style="left:356.00px;top:643.64px;font-size:8.1px;font-weight:400;color:#e4e4e4;letter-spacing:0.05px;">dynamlabs.vcu.0.0.1</div>
<div class="t" style="left:359.5px;top:35.38px;font-size:14.2px;font-weight:700;color:#f6f6f6;letter-spacing:0.1px">Calibration</div></div>
</body></html>
